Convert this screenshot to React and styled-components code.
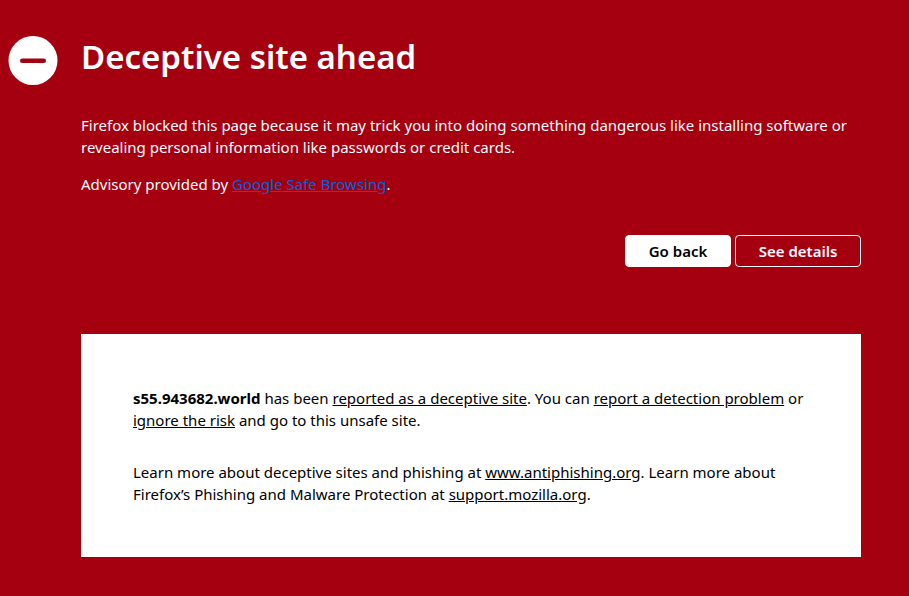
import React from 'react'
import styled, { createGlobalStyle } from 'styled-components'

const GlobalStyle = createGlobalStyle`
  html, body {
    margin: 0;
    padding: 0;
    background: #a4000f;
  }
  body {
    font-family: "Noto Sans", sans-serif;
    font-size: 15px;
    overflow: hidden;
  }
`
const Page = styled.div`
  width: 909px;
  height: 596px;
  box-sizing: border-box;
  padding: 35px 48px 0 8px;
  background: #a4000f;
  color: #fbfbfe;
`
const Header = styled.div`
  display: flex;
  align-items: flex-start;
  gap: 23px;
`
const Icon = styled.svg`
  width: 50px;
  height: 50px;
  flex: none;
`
const Main = styled.div`
  flex: 1;
`
const Title = styled.h1`
  margin: 0;
  font-size: 33px;
  line-height: 43px;
  font-weight: 600;
  color: #fff;
`
const Para = styled.p`
  margin: ${(props) => props.$top || 0}px 0 0;
  line-height: 22px;
`
const BlueLink = styled.a`
  color: #0060df;
  text-decoration: underline;
`
const Buttons = styled.div`
  display: flex;
  justify-content: flex-end;
  gap: 4px;
  margin-top: 40px;
`
const Button = styled.button`
  height: 32px;
  box-sizing: border-box;
  width: ${(props) => props.$width}px;
  padding: 0;
  border-radius: 4px;
  border: 1px solid ${(props) => (props.$primary ? '#fff' : '#fbfbfe')};
  background: ${(props) => (props.$primary ? '#fff' : '#a4000f')};
  color: ${(props) => (props.$primary ? '#000' : '#fbfbfe')};
  font-family: "Noto Sans", sans-serif;
  font-size: 15px;
  font-weight: 600;
`
const Details = styled.div`
  margin-top: 67px;
  height: 223px;
  box-sizing: border-box;
  padding: 53px 52px 0;
  background: #fff;
  color: #000;
`
const Link = styled.a`
  color: #000;
  text-decoration: underline;
`

export default function App() {
  return (
    <Page>
      <GlobalStyle />
      <Header>
        <Icon viewBox="0 0 50 50">
          <circle cx="25" cy="25.5" r="24.5" fill="#fff" />
          <rect x="12" y="23.5" width="26" height="4.5" rx="2.25" fill="#a4000f" />
        </Icon>
        <Main>
          <Title>Deceptive site ahead</Title>
          <Para $top={36}>
            Firefox blocked this page because it may trick you into doing something dangerous like installing software or revealing personal information like passwords or credit cards.
          </Para>
          <Para $top={15}>
            Advisory provided by <BlueLink>Google Safe Browsing</BlueLink>.
          </Para>
          <Buttons>
            <Button $primary $width={106}>Go back</Button>
            <Button $width={126}>See details</Button>
          </Buttons>
          <Details>
            <Para>
              <b>s55.943682.world</b> has been <Link>reported as a deceptive site</Link>. You can <Link>report a detection problem</Link> or <Link>ignore the risk</Link> and go to this unsafe site.
            </Para>
            <Para $top={30}>
              Learn more about deceptive sites and phishing at <Link>www.antiphishing.org</Link>. Learn more about Firefox’s Phishing and Malware Protection at <Link>support.mozilla.org</Link>.
            </Para>
          </Details>
        </Main>
      </Header>
    </Page>
  )
}
